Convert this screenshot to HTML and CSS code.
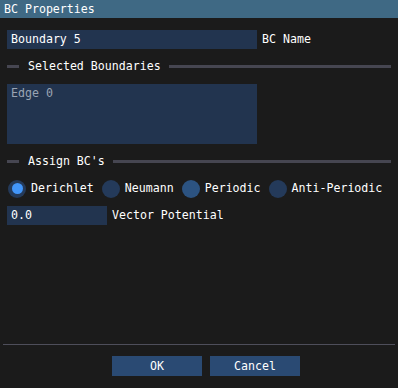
FILE: index.html
```html
<!DOCTYPE html>
<html lang="en">
<head>
  <meta charset="UTF-8">
  <meta name="viewport" content="width=device-width, initial-scale=1.0">
  <title>BC Properties</title>
  <link rel="stylesheet" href="styles.css">
</head>
<body>
  <div class="window">
    <div class="titlebar">BC Properties</div>

    <div class="content">
      <div class="row">
        <div class="input wide">Boundary 5</div>
        <span class="label">BC Name</span>
      </div>

      <div class="sep-text">
        <span class="line short"></span>
        <span class="sep-label">Selected Boundaries</span>
        <span class="line grow"></span>
      </div>

      <div class="listbox">
        <div class="list-item">Edge 0</div>
      </div>

      <div class="sep-text">
        <span class="line short"></span>
        <span class="sep-label">Assign BC's</span>
        <span class="line grow"></span>
      </div>

      <div class="radios">
        <label class="radio"><span class="dot checked"></span>Derichlet</label>
        <label class="radio"><span class="dot"></span>Neumann</label>
        <label class="radio"><span class="dot hover"></span>Periodic</label>
        <label class="radio"><span class="dot"></span>Anti-Periodic</label>
      </div>

      <div class="row">
        <div class="input narrow">0.0</div>
        <span class="label">Vector Potential</span>
      </div>
    </div>

    <div class="footer">
      <div class="hr"></div>
      <div class="buttons">
        <button class="btn">OK</button>
        <button class="btn">Cancel</button>
      </div>
    </div>
  </div>
</body>
</html>
```

FILE: styles.css
```css
html, body {
  margin: 0;
  padding: 0;
  background: #1b1b1b;
}
body {
  font-family: "DejaVu Sans Mono", "Liberation Mono", monospace;
  font-size: 11.6px;
  color: #fff;
}
.window {
  display: flex;
  flex-direction: column;
  height: 388px;
  width: 398px;
}
.titlebar {
  height: 18px;
  line-height: 18px;
  padding-left: 4px;
  background: #3f6984;
}
.content {
  display: flex;
  flex-direction: column;
  gap: 8px;
  padding: 12px 7px 0 7px;
}
.row {
  display: flex;
  align-items: center;
  gap: 5px;
  height: 19px;
  line-height: 19px;
}
.input {
  height: 19px;
  background: #22344f;
  padding-left: 4px;
  box-sizing: border-box;
}
.input.wide {
  width: 250px;
}
.input.narrow {
  width: 100px;
}
.sep-text {
  display: flex;
  align-items: center;
  height: 19px;
  line-height: 19px;
}
.line {
  height: 3px;
  background: #464651;
}
.line.short {
  width: 12px;
}
.line.grow {
  flex: 1;
}
.sep-label {
  padding: 0 8px 0 9px;
}
.listbox {
  width: 250px;
  height: 60px;
  background: #22344f;
  box-sizing: border-box;
  padding: 3px 4px;
}
.list-item {
  color: #9aa4b3;
  line-height: 13px;
}
.radios {
  display: flex;
  align-items: center;
  height: 19px;
  line-height: 19px;
  gap: 8px;
  padding-left: 1px;
}
.radio {
  display: flex;
  align-items: center;
  gap: 5px;
}
.dot {
  width: 18px;
  height: 18px;
  border-radius: 50%;
  background: #243a5a;
  display: flex;
  align-items: center;
  justify-content: center;
}
.dot.hover {
  background: #2c5381;
}
.dot.checked::after {
  content: "";
  width: 11px;
  height: 11px;
  border-radius: 50%;
  background: #4296fa;
}
.footer {
  margin-top: auto;
  padding-bottom: 12px;
}
.hr {
  height: 1px;
  margin: 0 3px;
  background: #4e4e5a;
}
.buttons {
  display: flex;
  gap: 8px;
  padding: 11px 0 0 112px;
}
.btn {
  width: 90px;
  height: 20px;
  border: none;
  border-radius: 0;
  background: #2a4a73;
  color: #fff;
  font-family: inherit;
  font-size: inherit;
  padding: 0;
}
```
